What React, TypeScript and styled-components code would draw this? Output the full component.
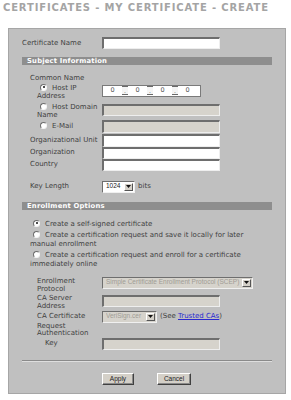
import React from 'react';
import styled, { createGlobalStyle } from 'styled-components';

const GlobalStyle = createGlobalStyle`
  html, body {
    margin: 0;
    padding: 0;
    background: #ffffff;
  }
  body {
    font-family: "DejaVu Sans", Verdana, sans-serif;
  }
`;

const Page = styled.div`
  width: 291px;
  height: 400px;
  overflow: hidden;
  background: #fff;
`;

const Title = styled.h1`
  margin: 0;
  padding: 3px 0 0 3px;
  height: 28px;
  box-sizing: border-box;
  font-size: 10px;
  line-height: 10px;
  font-weight: bold;
  letter-spacing: 0.85px;
  color: #a4a4a4;
  white-space: nowrap;
`;

const Panel = styled.div`
  margin-left: 8px;
  width: 278px;
  height: 366px;
  box-sizing: border-box;
  background: #c0c0c0;
  border: 1px solid #a6a6a6;
  padding: 8px 0 0 13px;
  color: #404040;
  font-size: 7px;
  line-height: 8.5px;
`;

const Row = styled.div<{ $mt?: number; $h?: number; $center?: boolean }>`
  display: grid;
  grid-template-columns: 80px 1fr;
  align-items: ${({ $center }) => ($center ? 'center' : 'start')};
  margin-top: ${({ $mt }) => $mt ?? 0}px;
  min-height: ${({ $h }) => $h ?? 0}px;
`;

const Label = styled.div<{ $indent?: number; $max?: number; $lh?: number }>`
  padding-left: ${({ $indent }) => $indent ?? 0}px;
  max-width: ${({ $max }) => ($max ? `${$max}px` : 'none')};
  line-height: ${({ $lh }) => ($lh ? `${$lh}px` : 'inherit')};
`;

const RadioLabel = styled.div<{ $indent?: number }>`
  padding-left: ${({ $indent }) => $indent ?? 15}px;
  text-indent: 3px;
  padding-right: 4px;
`;

const Field = styled.div<{ $mt?: number }>`
  display: flex;
  align-items: center;
  gap: 3px;
  margin-top: ${({ $mt }) => $mt ?? 0}px;
`;

const TextBox = styled.div<{ $w?: number; $h?: number; $disabled?: boolean }>`
  width: ${({ $w }) => $w ?? 118}px;
  height: ${({ $h }) => $h ?? 12}px;
  box-sizing: border-box;
  background: ${({ $disabled }) => ($disabled ? '#d6d3cc' : '#ffffff')};
  border-top: 2px solid #6e6e6e;
  border-left: 2px solid #6e6e6e;
  border-bottom: 1px solid #eeeeee;
  border-right: 1px solid #eeeeee;
`;

const IpBox = styled.div`
  width: 99px;
  height: 12px;
  box-sizing: border-box;
  background: #ffffff;
  border: 1px solid #7a7a7a;
  display: flex;
  align-items: center;
  font-size: 6.5px;
  color: #555;
`;

const IpPart = styled.span`
  width: 19px;
  text-align: center;
`;

const IpDot = styled.span`
  width: 6px;
  height: 9px;
  box-sizing: border-box;
  border-top: 1px solid #6a6a6a;
  border-bottom: 1px solid #6a6a6a;
  background: #f4f4f4;
  display: flex;
  align-items: flex-end;
  justify-content: center;
  line-height: 6px;
  font-size: 6px;
`;

const Bar = styled.div<{ $mt?: number }>`
  width: 250px;
  height: 8px;
  margin-top: ${({ $mt }) => $mt ?? 0}px;
  background: #8e8e8e;
  color: #ffffff;
  font-weight: bold;
  font-size: 6.8px;
  line-height: 8px;
  padding-left: 5px;
  box-sizing: border-box;
  letter-spacing: 0.2px;
`;

const Radio = styled.span<{ $checked?: boolean }>`
  display: inline-block;
  vertical-align: -1px;
  width: 7px;
  height: 7px;
  box-sizing: border-box;
  border-radius: 50%;
  background: #ffffff;
  border-top: 1px solid #6c6c6c;
  border-left: 1px solid #6c6c6c;
  border-right: 1px solid #f4f4f4;
  border-bottom: 1px solid #f4f4f4;
  margin-right: 5px;
  text-indent: 0;
  position: relative;
  &::after {
    content: '';
    display: ${({ $checked }) => ($checked ? 'block' : 'none')};
    position: absolute;
    left: 1.5px;
    top: 1.5px;
    width: 2px;
    height: 2px;
    border-radius: 50%;
    background: #111;
  }
`;

const Option = styled.div<{ $mt?: number }>`
  width: 226px;
  padding-left: 8px;
  text-indent: 3px;
  margin-top: ${({ $mt }) => $mt ?? 0}px;
  line-height: 9px;
`;

const Select = styled.div<{ $w: number; $h?: number; $disabled?: boolean }>`
  width: ${({ $w }) => $w}px;
  height: ${({ $h }) => $h ?? 12}px;
  box-sizing: border-box;
  display: flex;
  align-items: center;
  background: ${({ $disabled }) => ($disabled ? '#d6d3cc' : '#ffffff')};
  border-top: 1px solid #6e6e6e;
  border-left: 1px solid #6e6e6e;
  border-bottom: 1px solid #f0f0f0;
  border-right: 1px solid #f0f0f0;
  font-family: "Liberation Sans", Arial, sans-serif;
  font-size: 6.5px;
  color: ${({ $disabled }) => ($disabled ? '#a09c94' : '#222')};
  padding-left: 3px;
  gap: 2px;
`;

const SelectText = styled.span`
  flex: 1;
  white-space: nowrap;
  overflow: hidden;
`;

const SelectButton = styled.span`
  width: 9px;
  height: 8px;
  margin-right: 1px;
  box-sizing: border-box;
  background: #d4d0c8;
  border-top: 1px solid #ffffff;
  border-left: 1px solid #ffffff;
  border-bottom: 1px solid #555;
  border-right: 1px solid #555;
  display: flex;
  align-items: center;
  justify-content: center;
`;

const Suffix = styled.span`
  white-space: nowrap;
  font-size: 7px;
`;

const Link = styled.a`
  color: #2a2ad0;
  text-decoration: underline;
`;

const Rule = styled.div`
  width: 250px;
  height: 0;
  margin-top: 10px;
  border-top: 1px solid #8a8a8a;
  border-bottom: 1px solid #dedede;
`;

const Buttons = styled.div`
  display: flex;
  gap: 23px;
  margin-top: 11px;
  padding-left: 80px;
`;

const Button = styled.button<{ $w: number }>`
  width: ${({ $w }) => $w}px;
  height: 12px;
  padding: 0;
  box-sizing: border-box;
  background: #d4d0c8;
  border-top: 1px solid #ffffff;
  border-left: 1px solid #ffffff;
  border-bottom: 1px solid #404040;
  border-right: 1px solid #404040;
  font-family: "Liberation Sans", Arial, sans-serif;
  font-size: 6.5px;
  color: #222;
  box-shadow: inset -1px -1px 0 #8a8a8a;
`;

const Arrow = () => (
  <svg width="5" height="3" viewBox="0 0 5 3">
    <path d="M0 0h5L2.5 3z" fill="#111" />
  </svg>
);

const Dropdown: React.FC<{ w: number; text: string; disabled?: boolean }> = ({ w, text, disabled }) => (
  <Select $w={w} $disabled={disabled}>
    <SelectText>{text}</SelectText>
    <SelectButton>
      <Arrow />
    </SelectButton>
  </Select>
);

const IpInput = () => (
  <IpBox>
    <IpPart>0</IpPart>
    <IpDot>.</IpDot>
    <IpPart>0</IpPart>
    <IpDot>.</IpDot>
    <IpPart>0</IpPart>
    <IpDot>.</IpDot>
    <IpPart>0</IpPart>
  </IpBox>
);

export default function App() {
  return (
    <Page>
      <GlobalStyle />
      <Title>CERTIFICATES - MY CERTIFICATE - CREATE</Title>
      <Panel>
        <Row $center $h={12}>
          <Label>Certificate Name</Label>
          <TextBox />
        </Row>

        <Bar $mt={8}>Subject Information</Bar>

        <Row $mt={9}>
          <Label $indent={8}>Common Name</Label>
        </Row>
        <Row $mt={1} $h={19}>
          <RadioLabel>
            <Radio $checked />Host IP Address
          </RadioLabel>
          <Field $mt={1}>
            <IpInput />
          </Field>
        </Row>
        <Row $h={17}>
          <RadioLabel>
            <Radio />Host Domain Name
          </RadioLabel>
          <Field $mt={1}>
            <TextBox $disabled />
          </Field>
        </Row>
        <Row $center $h={13}>
          <RadioLabel>
            <Radio />E-Mail
          </RadioLabel>
          <TextBox $disabled $h={13} />
        </Row>
        <Row $center $h={13} $mt={1}>
          <Label $indent={8}>Organizational Unit</Label>
          <TextBox $h={13} />
        </Row>
        <Row $center $h={12}>
          <Label $indent={8}>Organization</Label>
          <TextBox />
        </Row>
        <Row $center $h={12}>
          <Label $indent={8}>Country</Label>
          <TextBox />
        </Row>
        <Row $center $h={10} $mt={10}>
          <Label $indent={8}>Key Length</Label>
          <Field>
            <Dropdown w={33} text="1024" />
            <Suffix>bits</Suffix>
          </Field>
        </Row>

        <Bar $mt={9}>Enrollment Options</Bar>

        <Option $mt={10}>
          <Radio $checked />Create a self-signed certificate
        </Option>
        <Option $mt={2}>
          <Radio />Create a certification request and save it locally for later manual enrollment
        </Option>
        <Option $mt={2}>
          <Radio />Create a certification request and enroll for a certificate immediately online
        </Option>

        <Row $mt={8} $h={16}>
          <Label $indent={15} $max={55}>Enrollment Protocol</Label>
          <Field>
            <Dropdown w={151} text="Simple Certificate Enrollment Protocol (SCEP)" disabled />
          </Field>
        </Row>
        <Row $h={16}>
          <Label $indent={15} $max={55}>CA Server Address</Label>
          <Field $mt={1}>
            <TextBox $disabled />
          </Field>
        </Row>
        <Row $center $h={12}>
          <Label $indent={15} $max={55}>CA Certificate</Label>
          <Field>
            <Dropdown w={55} text="VeriSign.cer" disabled />
            <Suffix>
              (See <Link href="#">Trusted CAs</Link>)
            </Suffix>
          </Field>
        </Row>
        <Row>
          <Label $indent={15} $max={55} $lh={7.5}>Request Authentication</Label>
        </Row>
        <Row $center $h={12}>
          <Label $indent={23}>Key</Label>
          <TextBox $disabled />
        </Row>

        <Rule />

        <Buttons>
          <Button $w={32}>Apply</Button>
          <Button $w={34}>Cancel</Button>
        </Buttons>
      </Panel>
    </Page>
  );
}
